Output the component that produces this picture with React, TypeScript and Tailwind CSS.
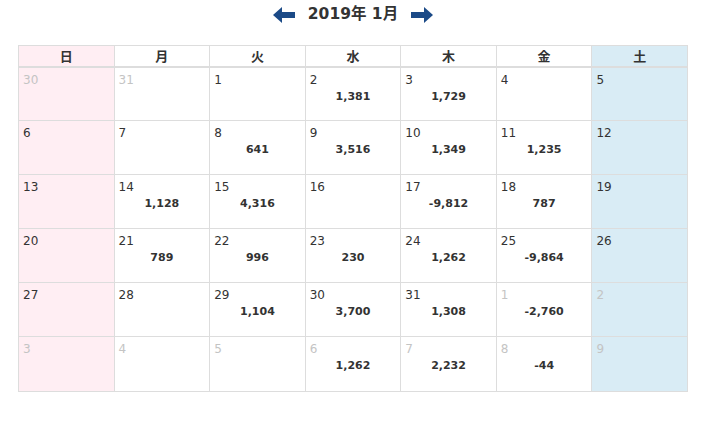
const weeks: [number, string | null, boolean][][] = [
  [[30, null, true], [31, null, true], [1, null, false], [2, "1,381", false], [3, "1,729", false], [4, null, false], [5, null, false]],
  [[6, null, false], [7, null, false], [8, "641", false], [9, "3,516", false], [10, "1,349", false], [11, "1,235", false], [12, null, false]],
  [[13, null, false], [14, "1,128", false], [15, "4,316", false], [16, null, false], [17, "-9,812", false], [18, "787", false], [19, null, false]],
  [[20, null, false], [21, "789", false], [22, "996", false], [23, "230", false], [24, "1,262", false], [25, "-9,864", false], [26, null, false]],
  [[27, null, false], [28, null, false], [29, "1,104", false], [30, "3,700", false], [31, "1,308", false], [1, "-2,760", true], [2, null, true]],
  [[3, null, true], [4, null, true], [5, null, true], [6, "1,262", true], [7, "2,232", true], [8, "-44", true], [9, null, true]],
];

const days = ["日", "月", "火", "水", "木", "金", "土"];

function Arrow({ dir }: { dir: "left" | "right" }) {
  return (
    <svg width="22" height="16" viewBox="0 0 22 16" className={dir === "left" ? "" : "rotate-180"}>
      <path d="M0 8 L9 0 L9 5 L22 5 L22 11 L9 11 L9 16 Z" fill="#1b4a87" />
    </svg>
  );
}

function colBg(i: number) {
  if (i === 0) return "bg-[#ffeef3]";
  if (i === 6) return "bg-[#d9ecf5]";
  return "bg-white";
}

export default function App() {
  return (
    <div className="w-[713px] h-[425px] bg-white font-['DejaVu_Sans','Noto_Sans_CJK_JP',sans-serif] text-[#333] pl-[18px]">
      <div className="w-[670px] h-[45px] flex items-start justify-center pt-[5px] gap-[13px]">
        <div className="h-[20px] flex items-center"><Arrow dir="left" /></div>
        <div className="h-[20px] flex items-center text-[15.5px] font-bold text-[#333] leading-none">
          2019年 1月
        </div>
        <div className="h-[20px] flex items-center"><Arrow dir="right" /></div>
      </div>
      <table className="w-[670px] table-fixed border-collapse">
        <thead>
          <tr className="h-[21px]">
            {days.map((d, i) => (
              <th
                key={d}
                className={`${colBg(i)} border border-[#ddd] border-b-2 text-[13px] font-bold leading-none p-0 font-['Noto_Sans_CJK_JP',sans-serif] text-[#333]`}
              >
                {d}
              </th>
            ))}
          </tr>
        </thead>
        <tbody>
          {weeks.map((w, r) => (
            <tr key={r} className={r === 5 ? "h-[55px]" : "h-[54px]"}>
              {w.map(([n, amt, other], i) => (
                <td key={i} className={`${colBg(i)} border border-[#ddd] align-top p-0`}>
                  <div className={`pl-[4px] pt-[5px] text-[12px] leading-[14px] ${other ? "text-[#c4c4c4]" : "text-[#333]"}`}>{n}</div>
                  {amt && (
                    <div className="text-center text-[11px] font-bold leading-[14px] mt-[3px] text-[#333]">{amt}</div>
                  )}
                </td>
              ))}
            </tr>
          ))}
        </tbody>
      </table>
    </div>
  );
}
